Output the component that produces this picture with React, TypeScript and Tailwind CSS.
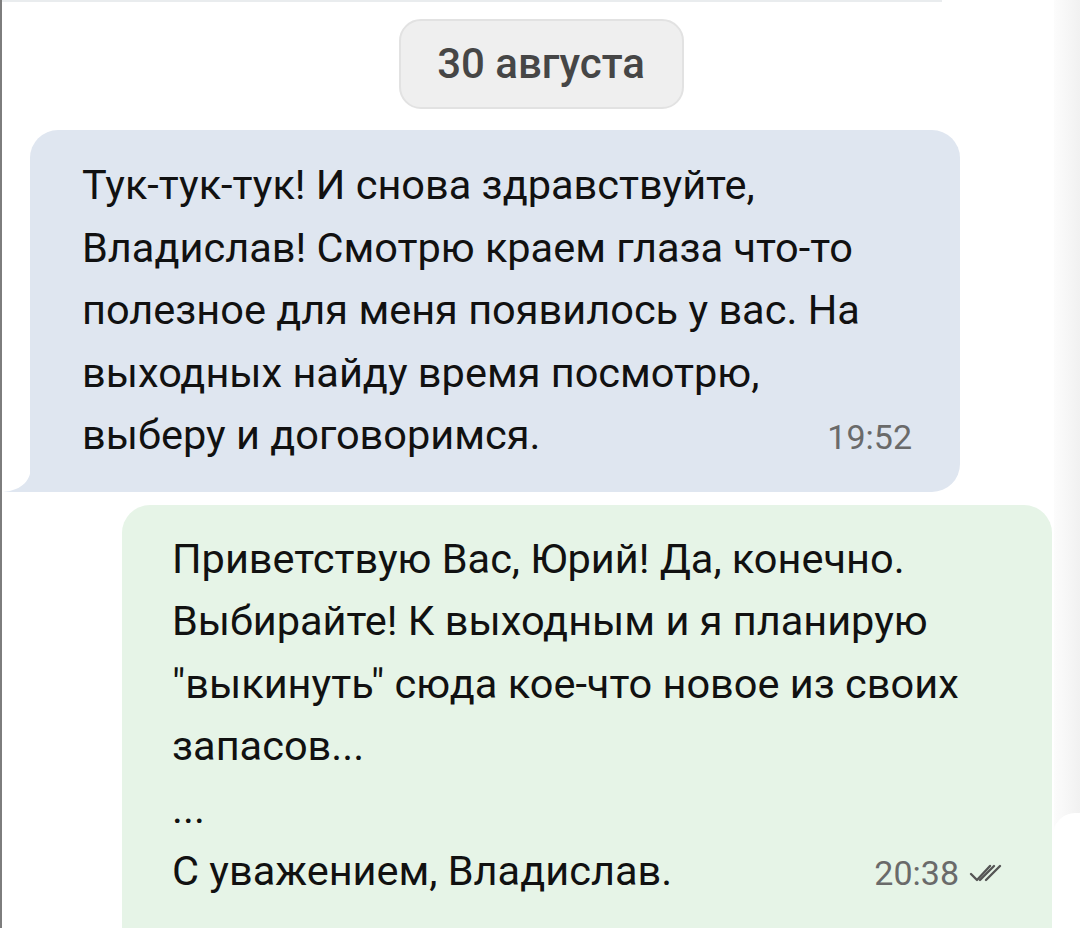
import React from 'react';

const textFont = { fontFamily: 'Roboto, "Noto Sans", sans-serif' };

const DoubleCheck: React.FC = () => (
    <svg width="36" height="20" viewBox="0 0 36 20" fill="none" stroke="#555" strokeWidth="2.4" strokeLinecap="round" strokeLinejoin="round">
        <path d="M3 11 L9 17 L22 3" />
        <path d="M12 17 L26 3" />
        <path d="M18 17 L32 3" />
    </svg>
);

export default function App() {
    return (
        <div className="relative w-[1080px] h-[928px] overflow-hidden bg-white border-l-2 border-[#7d7d7d]" style={textFont}>
            {/* right edge shading */}
            <div className="absolute right-0 top-0 h-full w-[26px] bg-gradient-to-r from-[#fcfcfc] to-[#f1f1f1]" />
            <div className="absolute right-0 top-[813px] h-[140px] w-[27px] bg-white rounded-tl-[22px]" />

            <div className="h-[2px] w-[940px] bg-[#e9ecee]" />

            <div className="flex flex-col">
                <div className="mx-auto mt-[17px] flex h-[90px] w-[285px] items-center justify-center rounded-[22px] border-2 border-[#e2e2e2] bg-[#efefef]">
                    <span className="text-[42px] font-medium text-[#464646] leading-none">30 августа</span>
                </div>

                {/* incoming */}
                <div className="relative ml-[28px] mt-[21px] w-[930px] rounded-[28px] rounded-bl-none bg-[#dfe6f0] pl-[52px] pr-[48px] pt-[24px] pb-[23px] text-[41.5px] leading-[62.5px] text-[#111]">
                    <svg className="absolute -left-[27px] bottom-0" width="28" height="26" viewBox="0 0 28 26">
                        <path d="M28 0 C28 14 20 24 0 26 L28 26 Z" fill="#dfe6f0" />
                    </svg>
                    <p>Тук-тук-тук! И снова здравствуйте,</p>
                    <p>Владислав! Смотрю краем глаза что-то</p>
                    <p>полезное для меня появилось у вас. На</p>
                    <p>выходных найду время посмотрю,</p>
                    <div className="flex items-baseline justify-between">
                        <span>выберу и договоримся.</span>
                        <span className="text-[34px] text-[#6a6a6a]">19:52</span>
                    </div>
                </div>

                {/* outgoing */}
                <div className="ml-[120px] mt-[13px] h-[460px] w-[930px] rounded-[28px] bg-[#e6f4e7] pl-[50px] pr-[48px] pt-[23px] text-[41.5px] leading-[62.5px] text-[#111]">
                    <p>Приветствую Вас, Юрий! Да, конечно.</p>
                    <p>Выбирайте! К выходным и я планирую</p>
                    <p>"выкинуть" сюда кое-что новое из своих</p>
                    <p>запасов...</p>
                    <p>...</p>
                    <div className="flex items-baseline justify-between">
                        <span>С уважением, Владислав.</span>
                        <span className="flex items-center gap-[9px] text-[34px] text-[#6a6a6a]">
                            20:38
                            <DoubleCheck />
                        </span>
                    </div>
                </div>
            </div>
        </div>
    );
}
